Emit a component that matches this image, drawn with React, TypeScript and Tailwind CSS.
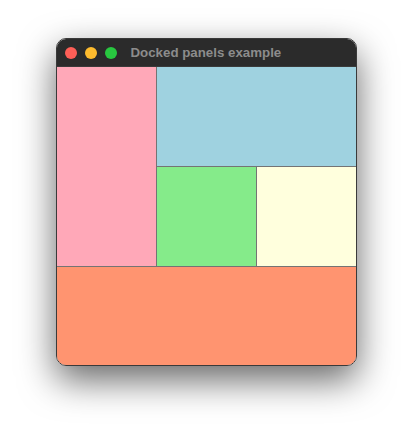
export default function App() {
  return (
    <div className="flex h-[440px] w-[412px] justify-center bg-white pt-[38px] font-['Liberation_Sans',Arial,sans-serif]">
      <div className="h-[328px] w-[301px] overflow-hidden rounded-[10px] border border-[#3a3a3a] shadow-[0_14px_36px_rgba(0,0,0,0.6)]">
        <div className="flex h-[27px] items-center gap-[8px] bg-[#2b2b2b] pl-[8px]">
          <span className="h-[12px] w-[12px] rounded-full bg-[#fe5f57]" />
          <span className="h-[12px] w-[12px] rounded-full bg-[#febc2e]" />
          <span className="h-[12px] w-[12px] rounded-full bg-[#28c840]" />
          <span className="ml-[6px] text-[13.3px] font-bold text-[#8c8c8c]">Docked panels example</span>
        </div>
        <div className="grid h-[300px] grid-cols-[99px_99px_100px] grid-rows-[99px_99px_100px] gap-px border-t border-[#3a3a3a] bg-[#747474]">
          <div className="row-span-2 bg-[#ffa8b8]" />
          <div className="col-span-2 bg-[#9fd2e0]" />
          <div className="bg-[#85eb8a]" />
          <div className="bg-[#ffffdd]" />
          <div className="col-span-3 bg-[#ff9470]" />
        </div>
      </div>
    </div>
  );
}
